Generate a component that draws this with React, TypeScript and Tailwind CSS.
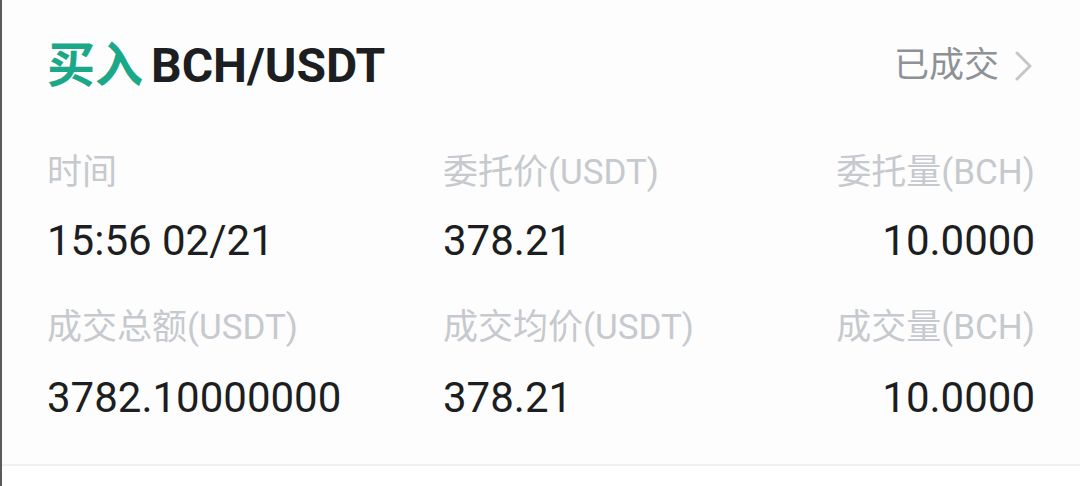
import React from "react";

const font = { fontFamily: '"Roboto", "Noto Sans CJK SC", sans-serif' };

export default function App() {
  const row1 = [
    ["时间", "15:56 02/21"],
    ["委托价(USDT)", "378.21"],
    ["委托量(BCH)", "10.0000"],
  ];
  const row2 = [
    ["成交总额(USDT)", "3782.10000000"],
    ["成交均价(USDT)", "378.21"],
    ["成交量(BCH)", "10.0000"],
  ];
  const renderRow = (rows: string[][], labelMt: string, valueMt: string) => (
    <>
      <div className={`grid grid-cols-[396px_1fr_1fr] ${labelMt}`}>
        {rows.map(([l], i) => (
          <div
            key={l}
            className={`h-[40px] leading-[40px] text-[35px] text-[#c6c9cd] whitespace-nowrap ${i === 2 ? "text-right" : ""}`}
          >
            {l}
          </div>
        ))}
      </div>
      <div className={`grid grid-cols-[396px_1fr_1fr] ${valueMt}`}>
        {rows.map(([l, v], i) => (
          <div
            key={l}
            className={`h-[48px] leading-[48px] text-[42px] text-[#1c1e22] whitespace-nowrap ${i === 2 ? "text-right" : ""}`}
          >
            {v}
          </div>
        ))}
      </div>
    </>
  );
  return (
    <div className="w-[1080px] h-[486px] bg-white flex" style={font}>
      <div className="w-[2px] bg-[#5a5a5a]" />
      <div className="flex-1 flex flex-col">
        <div className="bg-[#fdfdfd] pl-[45px] pr-[45px]">
          <div className="h-[132px] flex items-center justify-between">
            <div className="flex items-center text-[48px] font-bold">
              <span className="text-[#1ba889]">买入</span>
              <span className="ml-[8px] text-[#1c1e22]">BCH/USDT</span>
            </div>
            <div className="flex items-center text-[35px] text-[#8e9298]">
              <span>已成交</span>
              <svg width="24" height="34" viewBox="0 0 24 34" className="ml-[12px]" fill="none">
                <polyline points="6,4 19,17 6,30" stroke="#c4c6c9" strokeWidth="3" strokeLinecap="round" strokeLinejoin="round" />
              </svg>
            </div>
          </div>
          {renderRow(row1, "mt-[21px]", "mt-[24px]")}
          {renderRow(row2, "mt-[43px]", "mt-[26px]")}
          <div className="h-[42px]" />
        </div>
        <div className="h-[2px] bg-[#f0f0f0]" />
        <div className="flex-1 bg-white" />
      </div>
    </div>
  );
}
